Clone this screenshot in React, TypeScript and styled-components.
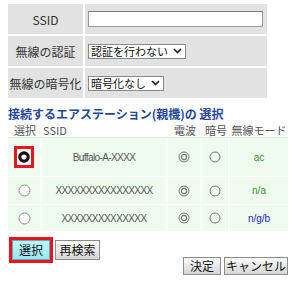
import React from "react";
import styled, { createGlobalStyle } from "styled-components";

const Global = createGlobalStyle`
  html, body { margin: 0; padding: 0; background: #fff; }
  body { font-family: "Noto Sans CJK JP", "Liberation Sans", sans-serif; font-size: 12px; color: #333; }
`;

const Page = styled.div`
  width: 300px;
  height: 282px;
  padding: 4px 10px 0 8px;
  box-sizing: border-box;
  display: flex;
  flex-direction: column;
`;

const SettingsGrid = styled.div`
  width: 259px;
  display: grid;
  grid-template-columns: 75px 1fr;
  grid-auto-rows: 30px;
  gap: 2px;
`;

const LabelCell = styled.div`
  background: #e2e2e2;
  display: flex;
  align-items: center;
  justify-content: center;
  font-size: 12px;
  color: #333;
  white-space: nowrap;
`;

const ValueCell = styled.div`
  background: #e2e2e2;
  display: flex;
  align-items: center;
  padding: 0 4px 0 3px;
`;

const TextInput = styled.input`
  width: 100%;
  height: 16px;
  box-sizing: border-box;
  border: 1px solid #9a9a9a;
  border-top-color: #7a7a7a;
  background: #fff;
  outline: none;
  padding: 0;
`;

const SelectBox = styled.div<{ $w: number }>`
  width: ${(p) => p.$w}px;
  height: 15px;
  box-sizing: border-box;
  border: 1px solid #8a8a8a;
  background: #fff;
  display: flex;
  align-items: center;
  justify-content: space-between;
  padding: 0 3px 0 2px;
  font-size: 11px;
  line-height: 12px;
  color: #111;
  white-space: nowrap;
`;

const Heading = styled.div`
  margin-top: 8px;
  font-size: 12px;
  font-weight: bold;
  color: #25479b;
  line-height: 16px;
  white-space: nowrap;
`;

const StationTable = styled.div`
  width: 280px;
  display: grid;
  grid-template-columns: 34px 126px 34px 28px 58px;
`;

const HeadCell = styled.div<{ $left?: boolean }>`
  height: 16px;
  box-sizing: border-box;
  display: flex;
  align-items: center;
  justify-content: ${(p) => (p.$left ? "flex-start" : "center")};
  padding-left: ${(p) => (p.$left ? "1px" : "0")};
  font-size: 11px;
  color: #555;
  white-space: nowrap;
  border-bottom: 1px solid #e6e6e6;
`;

const RowCell = styled.div<{ $h: number; $last?: boolean }>`
  height: ${(p) => p.$h}px;
  box-sizing: border-box;
  background: #eefbee;
  display: flex;
  align-items: center;
  justify-content: center;
  border-bottom: 1px solid #fff;
  border-right: ${(p) => (p.$last ? "0" : "2px solid #fff")};
  font-family: "Liberation Sans", sans-serif;
  font-size: 10px;
  color: #555;
  white-space: nowrap;
`;

const SsidText = styled.span`
  letter-spacing: -0.6px;
`;

const ModeText = styled.span<{ $color: string }>`
  color: ${(p) => p.$color};
  font-size: 10px;
`;

const SelectedRadioFrame = styled.div`
  width: 14px;
  height: 16px;
  border: 3px solid #e8141e;
  background: #fff;
  display: flex;
  align-items: center;
  justify-content: center;
`;

const ButtonRow = styled.div`
  margin-top: 5px;
  display: flex;
  align-items: center;
  gap: 2px;
  padding-left: 1px;
`;

const SelectFrame = styled.div`
  border: 3px solid #e8141e;
  display: flex;
`;

const Button = styled.button<{ $active?: boolean; $w: number; $h: number }>`
  width: ${(p) => p.$w}px;
  height: ${(p) => p.$h}px;
  box-sizing: border-box;
  border: 1px solid ${(p) => (p.$active ? "#6aa8b8" : "#8c8c8c")};
  background: ${(p) =>
    p.$active ? "linear-gradient(#bdf6fd, #98e8f6)" : "linear-gradient(#fafafa, #d6d6d6)"};
  font-family: "Noto Sans CJK JP", sans-serif;
  font-size: 12px;
  line-height: 14px;
  color: #111;
  padding: 0;
  display: flex;
  align-items: center;
  justify-content: center;
`;

const FooterRow = styled.div`
  margin-top: -6px;
  display: flex;
  justify-content: flex-end;
  gap: 3px;
  padding-right: 2px;
`;

const Chevron = () => (
  <svg width="9" height="6" viewBox="0 0 9 6">
    <path d="M1 1 L4.5 4.5 L8 1" fill="none" stroke="#222" strokeWidth="1.6" />
  </svg>
);

const EmptyRadio = () => (
  <svg width="13" height="13" viewBox="0 0 13 13">
    <circle cx="6.5" cy="6.5" r="5.5" fill="#fff" stroke="#8a8a8a" strokeWidth="1" />
  </svg>
);

const CheckedRadio = () => (
  <svg width="12" height="12" viewBox="0 0 12 12">
    <circle cx="6" cy="6" r="4.2" fill="#fff" stroke="#111" strokeWidth="3.2" />
  </svg>
);

const StrongSignal = () => (
  <svg width="12" height="12" viewBox="0 0 12 12">
    <circle cx="6" cy="6" r="5" fill="none" stroke="#777" strokeWidth="1" />
    <circle cx="6" cy="6" r="2.6" fill="none" stroke="#777" strokeWidth="1.2" />
  </svg>
);

const NoEncrypt = () => (
  <svg width="12" height="12" viewBox="0 0 12 12">
    <circle cx="6" cy="6" r="5" fill="none" stroke="#777" strokeWidth="1" />
  </svg>
);

const stations = [
  { ssid: "Buffalo-A-XXXX", mode: "ac", color: "#2c9a2c", h: 39, selected: true },
  { ssid: "XXXXXXXXXXXXXXXX", mode: "n/a", color: "#2c9a2c", h: 28, selected: false },
  { ssid: "XXXXXXXXXXXXXX", mode: "n/g/b", color: "#2424d8", h: 27, selected: false },
];

export default function App() {
  return (
    <>
      <Global />
      <Page>
        <SettingsGrid>
          <LabelCell>SSID</LabelCell>
          <ValueCell>
            <TextInput />
          </ValueCell>
          <LabelCell>無線の認証</LabelCell>
          <ValueCell>
            <SelectBox $w={98}>
              <span>認証を行わない</span>
              <Chevron />
            </SelectBox>
          </ValueCell>
          <LabelCell>無線の暗号化</LabelCell>
          <ValueCell>
            <SelectBox $w={76}>
              <span>暗号化なし</span>
              <Chevron />
            </SelectBox>
          </ValueCell>
        </SettingsGrid>

        <Heading>接続するエアステーション(親機)の 選択</Heading>

        <StationTable>
          <HeadCell>選択</HeadCell>
          <HeadCell $left>SSID</HeadCell>
          <HeadCell>電波</HeadCell>
          <HeadCell>暗号</HeadCell>
          <HeadCell>無線モード</HeadCell>
          {stations.map((s, i) => (
            <React.Fragment key={i}>
              <RowCell $h={s.h}>
                {s.selected ? (
                  <SelectedRadioFrame>
                    <CheckedRadio />
                  </SelectedRadioFrame>
                ) : (
                  <EmptyRadio />
                )}
              </RowCell>
              <RowCell $h={s.h}>
                <SsidText>{s.ssid}</SsidText>
              </RowCell>
              <RowCell $h={s.h}>
                <StrongSignal />
              </RowCell>
              <RowCell $h={s.h}>
                <NoEncrypt />
              </RowCell>
              <RowCell $h={s.h} $last>
                <ModeText $color={s.color}>{s.mode}</ModeText>
              </RowCell>
            </React.Fragment>
          ))}
        </StationTable>

        <ButtonRow>
          <SelectFrame>
            <Button $active $w={38} $h={20}>選択</Button>
          </SelectFrame>
          <Button $w={45} $h={20}>再検索</Button>
        </ButtonRow>

        <FooterRow>
          <Button $w={38} $h={18}>決定</Button>
          <Button $w={64} $h={18}>キャンセル</Button>
        </FooterRow>
      </Page>
    </>
  );
}
